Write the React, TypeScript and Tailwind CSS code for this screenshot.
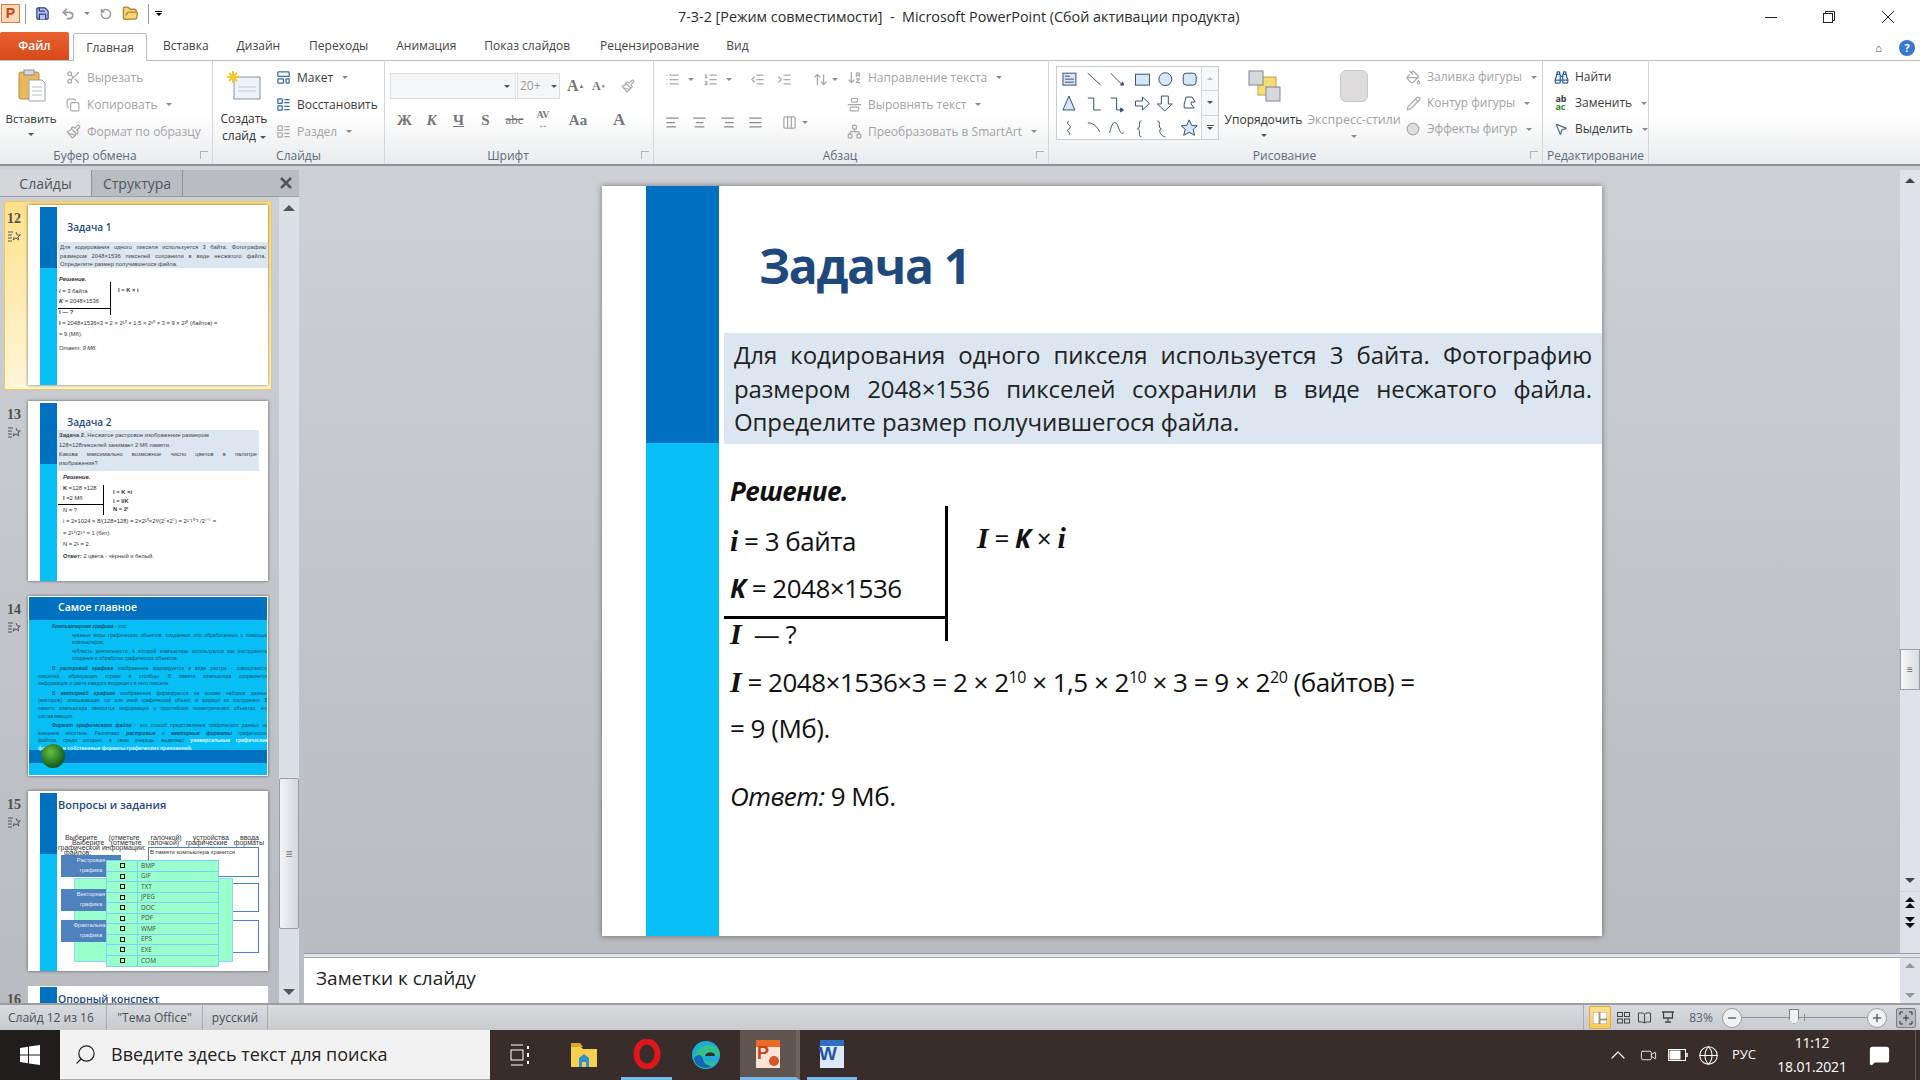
import type { ReactNode } from "react";
import {
  Scissors,
  Copy,
  Paintbrush,
  LayoutTemplate,
  LayoutList,
  RotateCcw,
  FolderOpen,
  Undo2,
  Save,
  ChevronUp,
  Search,
  Video,
  Globe,
  MessageSquare,
  Binoculars,
  MousePointer2,
  PaintBucket,
  Pencil,
  Circle,
  AlignLeft,
  AlignCenter,
  AlignRight,
  AlignJustify,
  AlignVerticalJustifyCenter,
  List,
  ListOrdered,
  IndentDecrease,
  IndentIncrease,
  Columns3,
  ArrowUpDown,
  ArrowDownAZ,
  Network,
  Minus,
  Plus,
} from "lucide-react";

const UI = "font-['Open_Sans','Noto_Sans',sans-serif]";

function Caret({ className = "" }: { className?: string }) {
  return <span className={`inline-block w-0 h-0 border-x-[3px] border-x-transparent border-t-[3px] border-t-[#8a8a8a] ${className}`} />;
}

function RibbonGroup({ label, width, children, launcher }: { label: string; width: number; children: ReactNode; launcher?: boolean }) {
  return (
    <div className="shrink-0 h-full flex flex-col border-r border-[#d3d7dc] relative" style={{ width }}>
      <div className="flex-1 min-h-0 flex">{children}</div>
      <div className={`h-[16px] flex items-center justify-center text-[12px] text-[#5f6b78] ${launcher ? "pr-[22px]" : ""}`}>{label}</div>
      {launcher && <span className="absolute right-[4px] bottom-[5px] w-[8px] h-[8px] border-l border-t border-[#b5b5b5]" />}
    </div>
  );
}

function SmallCmd({ icon, text, muted, caret, tight }: { icon: ReactNode; text: string; muted?: boolean; caret?: boolean; tight?: boolean }) {
  return (
    <div className={`${tight ? "h-[26px]" : "h-[27px]"} flex items-center gap-[6px] text-[12px] whitespace-nowrap ${muted ? "text-[#a3a3a3]" : "text-[#3b3b3b]"}`}>
      <span className="w-[16px] h-[16px] flex items-center justify-center">{icon}</span>
      {text}
      {caret && <Caret className="ml-[3px]" />}
    </div>
  );
}

function ShapesGallery() {
  const s = "#35507a";
  return (
    <div className="mt-[5px] w-[163px] h-[74px] border border-[#c7ccd2] bg-white flex">
      <svg width="145" height="72" viewBox="0 0 145 72" fill="none" stroke={s} strokeWidth="1">
        <g transform="translate(1 1)">
          <rect x="5" y="5" width="13" height="12" fill="#dce6f2" />
          <path d="M7 8h5M7 11h9M7 14h9" />
          <path d="M30 5l13 12M53 5l12 12" />
          <path d="M63 17l3 0-1-3z" fill={s} />
          <rect x="78" y="6" width="14" height="11" fill="#d7e6f5" />
          <circle cx="108" cy="11" r="6.500" fill="#d7e6f5" />
          <rect x="126" y="5" width="13" height="12" rx="3" fill="#d7e6f5" />
          <path d="M11 28l6 14h-12z" fill="#d7e6f5" />
          <path d="M30 30h6v12h7M53 30h6v12h6" />
          <path d="M63 40l3 2-3 2z" fill={s} />
          <path d="M78 33h7v-4l7 6.500-7 6.500v-4h-7z" fill="#fff" />
          <path d="M104 28h7v8h4l-7.500 7-7.500-7h4z" fill="#fff" />
          <path d="M127 36l2-7h6l3 5h-4v2l3 4h-10z" fill="#fff" />
          <path d="M11 53c-5 3 5 5 0 8-4 2 3 4 0 6M30 55c5 0 9 3 12 9M52 65c3-13 6-13 9-5s3 5 5 5M84 53c-4 0 0 7-4 8 4 1 0 8 4 8M100 53c4 0 0 7 4 8-4 1 0 8 4 8" />
          <path d="M132 52l2.500 5.500 5.500.5-4 3.500 1.500 6-5.500-3-5.500 3 1.500-6-4-3.500 5.500-.5z" fill="#d7e6f5" />
        </g>
      </svg>
      <div className="w-[17px] ml-auto flex flex-col border-l border-[#d4d8dd] bg-[#f6f7f8]">
        <div className="flex-1 flex items-center justify-center border-b border-[#d4d8dd]"><span className="w-0 h-0 border-x-[3px] border-x-transparent border-b-[3px] border-b-[#bbb]" /></div>
        <div className="flex-1 flex items-center justify-center border-b border-[#d4d8dd]"><Caret className="border-t-[#555]" /></div>
        <div className="flex-1 flex flex-col items-center justify-center gap-[1px]"><span className="w-[7px] h-px bg-[#555]" /><Caret className="border-t-[#555]" /></div>
      </div>
    </div>
  );
}

function Ribbon() {
  const m = "#a9a9a9";
  const sep = <span className="w-px h-[20px] bg-[#d4d7db]" />;
  return (
    <div className="h-[106px] shrink-0 flex bg-gradient-to-b from-white via-white to-[#e9ebed] border-t border-[#b9bcc0] border-b-2 border-b-[#8f9296]">
      <RibbonGroup label="Буфер обмена" width={213} launcher>
        <div className="w-[62px] flex flex-col items-center pt-[8px] text-[11.500px] text-[#333]">
          <svg width="30" height="34" viewBox="0 0 30 34">
            <rect x="3" y="3" width="20" height="27" rx="2" fill="#e7b95c" stroke="#b48a3e" />
            <rect x="8" y="1" width="10" height="5" fill="#d5d8dc" stroke="#8a8f96" />
            <path d="M13 11h13l3 3v18h-16z" fill="#fff" stroke="#9aa3ad" />
            <path d="M16 18h10M16 22h10M16 26h10" stroke="#b7bec6" />
          </svg>
          <span className="mt-[7px]">Вставить</span>
          <Caret className="mt-[6px] border-t-[#555]" />
        </div>
        <div className="pt-[3px] pl-[3px]">
          <SmallCmd muted icon={<Scissors size={15} color={m} />} text="Вырезать" />
          <SmallCmd muted caret icon={<Copy size={14} color={m} />} text="Копировать" />
          <SmallCmd muted icon={<Paintbrush size={15} color={m} />} text="Формат по образцу" />
        </div>
      </RibbonGroup>
      <RibbonGroup label="Слайды" width={172}>
        <div className="w-[62px] flex flex-col items-center pt-[9px] text-[12px] leading-[17px] text-[#333] text-center">
          <svg width="36" height="32" viewBox="0 0 36 32">
            <rect x="8" y="7" width="26" height="22" fill="#eef3f9" stroke="#8a96a3" />
            <path d="M12 17h18M12 21h18" stroke="#bcc7d3" />
            <path d="M7 1v12M1 7h12M3 3l8 8M11 3l-8 8" stroke="#f4c72f" strokeWidth="2" />
          </svg>
          <span className="mt-[8px]">Создать</span>
          <span>слайд <Caret className="ml-[1px] mb-[1px] border-t-[#555]" /></span>
        </div>
        <div className="pt-[3px]">
          <SmallCmd caret icon={<LayoutTemplate size={15} color="#3c6a9e" />} text="Макет" />
          <SmallCmd icon={<LayoutList size={15} color="#2f6aa8" />} text="Восстановить" />
          <SmallCmd muted caret icon={<LayoutList size={15} color={m} />} text="Раздел" />
        </div>
      </RibbonGroup>
      <RibbonGroup label="Шрифт" width={269} launcher>
        <div className="pl-[5px] pt-[12px] text-[#9a9a9a]">
          <div className="flex items-center">
            <div className="w-[126px] h-[26px] border border-[#dcdfe3] bg-[#f5f6f7] flex items-center justify-end pr-[5px]"><Caret className="border-t-[#555]" /></div>
            <div className="w-[43px] h-[26px] ml-px border border-[#dcdfe3] bg-[#f5f6f7] flex items-center justify-between px-[2px] text-[12px]">20+<Caret className="border-t-[#555]" /></div>
            <span className="ml-[7px] w-[17px] font-['Liberation_Serif',serif] text-[16px] font-bold text-[#777]">A<sup className="text-[6px]">▲</sup></span>
            <span className="ml-[8px] w-[14px] font-['Liberation_Serif',serif] text-[12px] font-bold text-[#777]">A<sup className="text-[5px]">▼</sup></span>
            <span className="ml-[5px]">{sep}</span>
            <Paintbrush size={14} color={m} className="ml-[10px]" />
          </div>
          <div className="flex items-center h-[24px] mt-[9px] ml-px font-['Liberation_Serif',serif] text-[15px] font-bold text-[#777] text-center">
            <span className="w-[27px]">Ж</span>
            <span className="w-[27px] italic">К</span>
            <span className="w-[27px] underline">Ч</span>
            <span className="w-[27px]">S</span>
            <span className="w-[31px] line-through font-normal text-[13px]">abc</span>
            <span className="w-[26px] text-[10px] leading-[10px]">AV<br />↔</span>
            <span className="w-[44px]">Aa</span>
            <span className="ml-[5px]">{sep}</span>
            <span className="ml-[8px] text-[17px]">A</span>
          </div>
        </div>
      </RibbonGroup>
      <RibbonGroup label="Абзац" width={395} launcher>
        <div className="w-[192px] shrink-0 pl-[11px] pt-[5px]">
          <div className="flex items-center h-[26px]">
            <List size={15} color={m} /><Caret className="ml-[8px]" />
            <ListOrdered size={15} color={m} className="ml-[9px]" /><Caret className="ml-[8px]" />
            <span className="ml-[9px]">{sep}</span>
            <IndentDecrease size={15} color={m} className="ml-[9px]" /><IndentIncrease size={15} color={m} className="ml-[12px]" />
            <span className="ml-[9px]">{sep}</span>
            <ArrowUpDown size={15} color={m} className="ml-[12px]" /><Caret className="ml-[4px]" />
          </div>
          <div className="flex items-center h-[26px] mt-[17px]">
            <AlignLeft size={15} color="#8a8a8a" /><AlignCenter size={15} color="#8a8a8a" className="ml-[12px]" /><AlignRight size={15} color="#8a8a8a" className="ml-[13px]" /><AlignJustify size={15} color="#8a8a8a" className="ml-[13px]" />
            <span className="ml-[10px]">{sep}</span>
            <Columns3 size={15} color={m} className="ml-[9px]" /><Caret className="ml-[5px]" />
          </div>
        </div>
        <div className="pt-[3px]">
          <SmallCmd muted caret icon={<ArrowDownAZ size={15} color={m} />} text="Направление текста" />
          <SmallCmd muted caret icon={<AlignVerticalJustifyCenter size={15} color={m} />} text="Выровнять текст" />
          <SmallCmd muted caret icon={<Network size={15} color={m} />} text="Преобразовать в SmartArt" />
        </div>
      </RibbonGroup>
      <RibbonGroup label="Рисование" width={494} launcher>
        <div className="pl-[7px]"><ShapesGallery /></div>
        <div className="w-[85px] ml-[2px] flex flex-col items-center pt-[9px] text-[12px] text-[#333]">
          <svg width="36" height="32" viewBox="0 0 36 32">
            <rect x="12" y="7" width="18" height="18" fill="#f6dc75" stroke="#b9a24a" />
            <rect x="3" y="1" width="14" height="14" fill="#d5d8dc" stroke="#808790" />
            <rect x="20" y="17" width="14" height="14" fill="#d5d8dc" stroke="#808790" />
          </svg>
          <span className="mt-[9px]">Упорядочить</span>
          <Caret className="mt-[5px] border-t-[#555]" />
        </div>
        <div className="w-[96px] flex flex-col items-center pt-[9px] text-[12.500px] text-[#a3a3a3]">
          <div className="w-[28px] h-[32px] rounded-[6px] bg-[#dedcdc] border border-[#c9c7c7]" />
          <span className="mt-[9px] whitespace-nowrap">Экспресс-стили</span>
          <Caret className="mt-[5px]" />
        </div>
        <div className="pl-[3px] pt-[3px]">
          <SmallCmd tight muted caret icon={<PaintBucket size={15} color={m} />} text="Заливка фигуры" />
          <SmallCmd tight muted caret icon={<Pencil size={15} color={m} />} text="Контур фигуры" />
          <SmallCmd tight muted caret icon={<Circle size={14} color={m} fill="#ddd" />} text="Эффекты фигур" />
        </div>
      </RibbonGroup>
      <RibbonGroup label="Редактирование" width={106}>
        <div className="pl-[10px] pt-[3px]">
          <SmallCmd tight icon={<Binoculars size={15} color="#2f5e9e" />} text="Найти" />
          <SmallCmd tight caret icon={<span className="text-[9px] leading-[8px] font-bold text-[#3a3a3a]">ab<br /><span className="text-[#2a8a2a]">ac</span></span>} text="Заменить" />
          <SmallCmd tight caret icon={<MousePointer2 size={14} color="#5a6a7c" />} text="Выделить" />
        </div>
      </RibbonGroup>
    </div>
  );
}

function ThumbNum({ n }: { n: number }) {
  return (
    <div className="w-[23px] shrink-0 pl-[2px] pt-[6px] text-[#54504a] font-['Liberation_Serif',serif] font-bold text-[14px] leading-[16px]">
      {n}
      <svg className="mt-[3px]" width="14" height="12" viewBox="0 0 14 12" fill="none" stroke="#555">
        <path d="M1 2h5M1 5h4M1 8h4M1 11h4" />
        <path d="M9 2l1.300 3h3l-2.500 2 1 3-2.800-2-2.800 2 1-3" />
      </svg>
    </div>
  );
}

function MiniText({ children, className = "" }: { children: ReactNode; className?: string }) {
  return <div className={`font-['Liberation_Sans',sans-serif] text-[5.800px] leading-[8.500px] whitespace-nowrap ${className}`}>{children}</div>;
}

function MiniLine({ children, className = "" }: { children: ReactNode; className?: string }) {
  return <MiniText className={`[text-align:justify] [text-align-last:justify] whitespace-normal ${className}`}>{children}</MiniText>;
}

function Thumb({ children, bg = "bg-white" }: { children: ReactNode; bg?: string }) {
  return (
    <div className={`relative w-[240px] h-[180px] shrink-0 overflow-hidden ${bg} shadow-[0_0_3px_rgba(0,0,0,0.55)]`}>{children}</div>
  );
}

function BlueBar() {
  return (
    <div className="absolute left-[12px] top-[2px] bottom-0 w-[17px] flex flex-col">
      <div className="h-[61px] bg-[#0070c0]" />
      <div className="flex-1 bg-[#08bff5]" />
    </div>
  );
}

function Slide12Thumb() {
  return (
    <Thumb>
      <BlueBar />
      <div className="absolute left-[39px] top-[15px] text-[10px] font-semibold text-[#1f497d]">Задача 1</div>
      <div className="absolute left-[30px] right-0 top-[37px] h-[26px] bg-[#dce6f1] px-[2px] pt-[1px] text-[#444]">
        <MiniLine>Для кодирования одного пикселя используется 3 байта. Фотографию</MiniLine>
        <MiniLine>размером 2048×1536 пикселей сохранили в виде несжатого файла.</MiniLine>
        <MiniText>Определите размер получившегося файла.</MiniText>
      </div>
      <div className="absolute left-[31px] top-[70px] text-[#333]">
        <MiniText className="font-bold italic">Решение.</MiniText>
        <MiniText className="mt-[3px]"><b><i>i</i></b> = 3 байта</MiniText>
        <MiniText className="mt-[2px]"><b><i>K</i></b> = 2048×1536</MiniText>
        <MiniText className="mt-[2px] font-bold">I — ?</MiniText>
        <MiniText className="mt-[3px]"><b>I</b> = 2048×1536×3 = 2 × 2¹⁰ × 1,5 × 2¹⁰ × 3 = 9 × 2²⁰ (байтов) =</MiniText>
        <MiniText className="mt-[2px]">= 9 (Мб).</MiniText>
        <MiniText className="mt-[6px] italic">Ответ: 9 Мб.</MiniText>
      </div>
      <div className="absolute left-[30px] top-[103px] w-[52px] h-px bg-black" />
      <div className="absolute left-[82px] top-[77px] w-px h-[33px] bg-black" />
      <div className="absolute left-[90px] top-[81px] text-[#333]"><MiniText className="font-bold">I = K × i</MiniText></div>
    </Thumb>
  );
}

function Slide13Thumb() {
  return (
    <Thumb>
      <BlueBar />
      <div className="absolute left-[39px] top-[14px] text-[10px] font-semibold text-[#1f497d]">Задача 2</div>
      <div className="absolute left-[29px] right-[9px] top-[29px] h-[41px] bg-[#dce6f1] px-[2px] pt-[1px] text-[#444]">
        <MiniText><b>Задача 2.</b> Несжатое растровое изображение размером</MiniText>
        <MiniText className="mt-[1px]">128×128пикселей занимает 2 Мб памяти.</MiniText>
        <MiniLine className="mt-[1px]">Какова максимально возможное число цветов в палитре</MiniLine>
        <MiniText>изображения?</MiniText>
      </div>
      <div className="absolute left-[35px] top-[72px] text-[#333]">
        <MiniText className="font-bold italic">Решение.</MiniText>
        <MiniText className="mt-[2px]"><b>K</b> =128 ×128</MiniText>
        <MiniText className="mt-[2px]"><b>I</b> =2 Мб</MiniText>
        <MiniText className="mt-[3px]">N = ?</MiniText>
        <MiniText className="mt-[3px]">i = 2×1024 × 8/(128×128) = 2×2¹⁰×2³/(2⁷×2⁷) = 2¹⁺¹⁰⁺³ /2⁷⁺⁷ =</MiniText>
        <MiniText className="mt-[3px]">= 2¹⁴/2¹⁴ = 1 (бит).</MiniText>
        <MiniText className="mt-[3px]">N = 2¹ = 2.</MiniText>
        <MiniText className="mt-[3px]"><b>Ответ:</b> 2 цвета - чёрный и белый.</MiniText>
      </div>
      <div className="absolute left-[30px] top-[103px] w-[45px] h-px bg-black" />
      <div className="absolute left-[75px] top-[84px] w-px h-[30px] bg-black" />
      <div className="absolute left-[85px] top-[87px] text-[#333] font-bold">
        <MiniText>I = K ×i</MiniText>
        <MiniText>i = I/K</MiniText>
        <MiniText>N = 2ⁱ</MiniText>
      </div>
    </Thumb>
  );
}

function Slide14Thumb() {
  return (
    <Thumb bg="bg-[#08bff5]">
      <div className="absolute left-0 right-0 top-0 h-[24px] bg-[#0070c0] pl-[30px] pt-[4px] text-[10.500px] font-semibold text-white">Самое главное</div>
      <div className="absolute left-0 right-0 top-[154px] h-[13px] bg-[#0070c0]" />
      <div className="absolute left-[10px] right-0 top-[27px] text-[#10506f] [&>div]:text-[5px] [&>div]:leading-[7.600px]">
        <MiniText className="pl-[14px]"><b><i>Компьютерная графика</i></b> - это:</MiniText>
        <MiniLine className="pl-[34px] mt-[1px]">•разные виды графических объектов, созданных или обработанных с помощью</MiniLine>
        <MiniText className="pl-[34px]">компьютеров;</MiniText>
        <MiniLine className="pl-[34px] mt-[1px]">•область деятельности, в которой компьютеры используются как инструменты</MiniLine>
        <MiniText className="pl-[34px]">создания и обработки графических объектов.</MiniText>
        <MiniLine className="pl-[14px] mt-[2px]">В <b><i>растровой графике</i></b> изображение формируется в виде растра - совокупности</MiniLine>
        <MiniLine>пикселей, образующих строки и столбцы. В памяти компьютера сохраняется</MiniLine>
        <MiniText>информация о цвете каждого входящего в него пикселя.</MiniText>
        <MiniLine className="pl-[14px] mt-[2px]">В <b><i>векторной графике</i></b> изображения формируются на основе наборов данных</MiniLine>
        <MiniLine>(векторов), описывающих тот или иной графический объект, и формул их построения. В</MiniLine>
        <MiniLine>памяти компьютера заносится информация о простейших геометрических объектах, его</MiniLine>
        <MiniText>составляющих.</MiniText>
        <MiniLine className="pl-[14px] mt-[2px]"><b><i>Формат графического файла</i></b> - это способ представления графических данных на</MiniLine>
        <MiniLine>внешнем носителе. Различают <b><i>растровые</i></b> и <b><i>векторные форматы</i></b> графических</MiniLine>
        <MiniLine>файлов, среди которых, в свою очередь, выделяют <span className="text-[#e6f7fd] font-bold">универсальные графические</span></MiniLine>
        <MiniText className="font-bold text-[#d8f3fb]">форматы и собственные форматы графических приложений.</MiniText>
      </div>
      <div className="absolute left-[13px] top-[148px] w-[24px] h-[24px] rounded-full bg-[radial-gradient(circle_at_40%_35%,#67c23a,#1d6b24_60%,#0d2e12)]" />
      <div className="absolute inset-0 border border-white" />
    </Thumb>
  );
}

function Slide15Thumb() {
  const rows = ["BMP", "GIF", "TXT", "JPEG", "DOC", "PDF", "WMF", "EPS", "EXE", "COM"];
  const labels = [
    { t: "Растровая", c: "top-[64px]" },
    { t: "Векторная", c: "top-[98px]" },
    { t: "Фрактальная", c: "top-[129px]" },
  ];
  return (
    <Thumb>
      <BlueBar />
      <div className="absolute left-[30px] top-[6px] text-[11px] font-semibold text-[#1f497d]">Вопросы и задания</div>
      <div className="absolute left-[37px] top-[43px] w-[194px] text-[#333] [&>div]:text-[7px]"><MiniLine>Выберите (отметьте галочкой) устройства ввода</MiniLine></div>
      <div className="absolute left-[44px] top-[48px] w-[192px] text-[#333] [&>div]:text-[7px]"><MiniLine>Выберите (отметьте галочкой) графические форматы</MiniLine></div>
      <div className="absolute left-[30px] top-[53px] text-[#333] [&>div]:text-[7px]"><MiniText>графической информации:</MiniText></div>
      <div className="absolute left-[36px] top-[58px] text-[#333] [&>div]:text-[7px]"><MiniText>файлов:</MiniText></div>
      {[
        { c: "top-[56px] h-[30px]", t: "В памяти компьютера хранится" },
        { c: "top-[92px] h-[29px]", t: "" },
        { c: "top-[129px] h-[33px]", t: "" },
      ].map((b) => (
        <div key={b.c} className={`absolute left-[120px] w-[111px] border border-[#4f81bd] bg-white pl-[1px] text-[#333] ${b.c}`}><MiniText>{b.t}</MiniText></div>
      ))}
      <div className="absolute left-[46px] top-[87px] w-[159px] h-[84px] bg-[#99ffcc] border border-[#8ed8f0]" />
      {labels.map((l) => (
        <div key={l.t} className={`absolute left-[33px] w-[60px] h-[22px] bg-[#4f81bd] text-[#e8eef5] text-center ${l.c}`}>
          <MiniText className="leading-[10px]">{l.t}</MiniText><MiniText className="leading-[10px]">графика</MiniText>
        </div>
      ))}
      <div className="absolute left-[78px] top-[69px] w-[113px] bg-[#99ffcc] border border-[#7fd0f5]">
        {rows.map((r) => (
          <div key={r} className="h-[10.500px] flex items-center border-b border-[#7fd0f5] last:border-b-0">
            <span className="w-[30px] flex justify-center"><span className="w-[5px] h-[5px] border border-black" /></span>
            <span className="pl-[3px] border-l border-[#7fd0f5] text-[6.500px] text-[#444]">{r}</span>
          </div>
        ))}
      </div>
    </Thumb>
  );
}

function SlidePanel() {
  const items = [
    { n: 13, el: <Slide13Thumb />, mt: "mt-[11px]" },
    { n: 14, el: <Slide14Thumb />, mt: "mt-[15px]" },
    { n: 15, el: <Slide15Thumb />, mt: "mt-[15px]" },
  ];
  return (
    <div className="w-[304px] shrink-0 flex flex-col pt-[4px] bg-gradient-to-b from-[#cdd0d5] to-[#b8bbbf]">
      <div className="h-[27px] shrink-0 flex bg-[#b9bcc0] border-b border-[#9b9ea2] text-[14px] text-[#4c5560] mr-[5px]">
        <div className="w-[91px] bg-[#d4d6d9] flex items-center justify-center">Слайды</div>
        <div className="w-[92px] flex items-center justify-center border-x border-[#8d9094]">Структура</div>
        <div className="flex-1 flex items-center justify-end pr-[7px]">
          <svg width="12" height="12" viewBox="0 0 12 12" stroke="#555" strokeWidth="2.500"><path d="M1 1l10 10M11 1L1 11" /></svg>
        </div>
      </div>
      <div className="flex-1 min-h-0 flex">
        <div className="flex-1 min-w-0 overflow-hidden pt-[4px] pl-[4px]">
          <div className="w-[268px] flex border border-[#f2c85b] rounded-[2px] bg-gradient-to-b from-[#fde08a] to-[#fff6d8] pt-[3px] pb-[4px]">
            <ThumbNum n={12} />
            <Slide12Thumb />
          </div>
          {items.map((it) => (
            <div key={it.n} className={`flex ${it.mt} pl-px`}>
              <ThumbNum n={it.n} />
              {it.el}
            </div>
          ))}
          <div className="flex mt-[15px] pl-px">
            <ThumbNum n={16} />
            <div className="relative w-[240px] h-[40px] bg-white overflow-hidden">
              <div className="absolute left-[12px] top-[1px] w-[17px] h-[40px] bg-[#0070c0]" />
              <div className="absolute left-[30px] top-[6px] text-[10.500px] font-semibold text-[#1f497d]">Опорный конспект</div>
            </div>
          </div>
        </div>
        <div className="w-[20px] shrink-0 mr-[5px] flex flex-col bg-[#dbdfe6]">
          <div className="h-[22px] flex items-center justify-center"><span className="w-0 h-0 border-x-[6px] border-x-transparent border-b-[6px] border-b-[#555]" /></div>
          <div className="flex-1 flex flex-col">
            <div className="h-[559px]" />
            <div className="h-[151px] bg-gradient-to-r from-[#f3f4f6] to-[#d4d7dd] border border-[#9a9da2] rounded-[2px] flex items-center justify-center text-[#777] text-[12px]">≡</div>
          </div>
          <div className="h-[22px] flex items-center justify-center"><Caret className="border-x-[6px] border-t-[6px] border-t-[#555]" /></div>
        </div>
      </div>
    </div>
  );
}

function Var({ children }: { children: ReactNode }) {
  return <span className="font-['Liberation_Serif',serif] italic font-bold text-[30px]">{children}</span>;
}

function Sup({ children }: { children: ReactNode }) {
  return <sup className="text-[16px] -top-[9px]">{children}</sup>;
}

function Slide() {
  return (
    <div className="relative w-[1000px] h-[750px] bg-white shadow-[0_0_6px_rgba(0,0,0,0.45)] overflow-hidden text-[#111]">
      <div className="flex h-full">
        <div className="ml-[44px] w-[73px] shrink-0 flex flex-col">
          <div className="h-[257px] bg-[#0070c0]" />
          <div className="flex-1 bg-[#08bff5]" />
        </div>
        <div className="flex-1 min-w-0 pl-[5px]">
          <div className="h-[147px] pl-[35px] pt-[46px] text-[48px] leading-[68px] font-bold text-[#1f497d] tracking-[-1.3px]">Задача 1</div>
          <div className="h-[111px] bg-[#dce6f1] px-[10px] pt-[5px] text-[24px] leading-[33.500px] text-[#222] [text-align:justify] tracking-[-0.1px]">
            Для кодирования одного пикселя используется 3 байта. Фотографию размером 2048×1536 пикселей сохранили в виде несжатого файла. Определите размер получившегося файла.
          </div>
          <div className="relative pl-[6px] text-[26px] tracking-[-0.5px]">
            <div className="pt-[27px] leading-[40px] font-bold italic">Решение.</div>
            <div className="mt-[10px] leading-[40px]"><Var>i</Var> = 3 байта</div>
            <div className="mt-[7px] leading-[40px]"><b><i>K</i></b> = 2048×1536</div>
            <div className="mt-[6px] leading-[40px]"><Var>I</Var> &nbsp;— ?</div>
            <div className="mt-[8px] leading-[40px] whitespace-nowrap"><Var>I</Var> = 2048×1536×3 = 2 × 2<Sup>10</Sup> × 1,5 × 2<Sup>10</Sup> × 3 = 9 × 2<Sup>20</Sup> (байтов) =</div>
            <div className="mt-[6px] leading-[40px]">= 9 (Мб).</div>
            <div className="mt-[28px] leading-[40px]"><i>Ответ:</i> 9 Мб.</div>
            <div className="absolute left-0 top-[172px] w-[222px] h-[3px] bg-black" />
            <div className="absolute left-[221px] top-[62px] w-[3px] h-[135px] bg-black" />
            <div className="absolute left-[253px] top-[74px] leading-[40px] whitespace-nowrap"><Var>I</Var> = <b><i>K</i></b> × <Var>i</Var></div>
          </div>
        </div>
      </div>
    </div>
  );
}

function MainScroll() {
  return (
    <div className="w-[20px] shrink-0 flex flex-col bg-[#dfe2e8] mt-[4px]">
      <div className="h-[20px] flex items-center justify-center"><span className="w-0 h-0 border-x-[5px] border-x-transparent border-b-[5px] border-b-[#444]" /></div>
      <div className="flex-1 relative">
        <div className="absolute left-0 right-0 top-[459px] h-[41px] bg-gradient-to-r from-[#f7f8f9] to-[#d9dce2] border border-[#9a9da2] flex items-center justify-center text-[10px] text-[#666]">≡</div>
      </div>
      <div className="h-[22px] flex items-center justify-center"><Caret className="border-x-[5px] border-t-[5px] border-t-[#444]" /></div>
      <div className="h-[62px] pt-[5px] flex flex-col items-center gap-[6px] border-t border-[#cfd2d7]">
        <svg width="12" height="13" viewBox="0 0 12 13"><path d="M6 0l5 5H1zM6 6l5 5H1z" fill="#111" /></svg>
        <svg width="12" height="13" viewBox="0 0 12 13"><path d="M1 1h10L6 6zM1 7h10l-5 5z" fill="#111" /></svg>
      </div>
    </div>
  );
}

function StatusBar() {
  return (
    <div className="h-[27px] shrink-0 flex items-center bg-gradient-to-b from-[#d9dbde] to-[#c8cbce] border-t-2 border-[#9a9da1] text-[12px] text-[#4a4f55]">
      <div className="h-full w-[107px] flex items-center whitespace-nowrap pl-[8px] border-r border-[#a8abaf]">Слайд 12 из 16</div>
      <div className="h-full w-[96px] flex items-center justify-center whitespace-nowrap border-r border-[#a8abaf]">&quot;Тема Office&quot;</div>
      <div className="h-full w-[65px] flex items-center justify-center border-r border-[#a8abaf]">русский</div>
      <div className="ml-auto h-full flex items-center pr-[4px]">
        <span className="w-px h-full bg-[#a8abaf] mr-[5px]" />
        <div className="w-[22px] h-[23px] rounded-[2px] border border-[#e0a93c] bg-gradient-to-b from-[#ffe08a] to-[#fbc95a] flex items-center justify-center">
          <svg width="14" height="12" viewBox="0 0 14 12"><rect x="0" y="0" width="6" height="12" fill="#fff" stroke="#444" strokeWidth=".5" /><rect x="7" y="0" width="7" height="7" fill="#fff" stroke="#444" strokeWidth=".5" /><rect x="7" y="8" width="7" height="4" fill="#fff" stroke="#444" strokeWidth=".5" /></svg>
        </div>
        <svg className="ml-[6px]" width="13" height="12" viewBox="0 0 13 12" fill="none" stroke="#444"><rect x=".5" y=".5" width="5" height="4" /><rect x="7.500" y=".5" width="5" height="4" /><rect x=".5" y="7" width="5" height="4" /><rect x="7.500" y="7" width="5" height="4" /></svg>
        <svg className="ml-[8px]" width="13" height="12" viewBox="0 0 13 12" fill="none" stroke="#444"><path d="M6.500 2C5 .8 3 .8 .5 1v9c2.500-.2 4.500-.2 6 1 1.500-1.200 3.500-1.200 6-1V1C10 .8 8 .8 6.500 2zM6.500 2v9" /></svg>
        <svg className="ml-[10px]" width="14" height="13" viewBox="0 0 14 13" fill="none" stroke="#444"><path d="M1 1h12M2.500 1v6h9V1M7 7v3M4 11h6" strokeWidth="1.300" /></svg>
        <span className="ml-[14px] w-[24px] text-center whitespace-nowrap text-[#5a5f68]">83%</span>
        <span className="ml-[9px] w-[20px] h-[20px] rounded-full border border-[#9a9da2] bg-[#f0f1f3] flex items-center justify-center"><Minus size={12} color="#666" strokeWidth={3} /></span>
        <div className="relative w-[125px] h-px bg-[#8f9296]">
          <span className="absolute left-[47px] -top-[8px] w-[10px] h-[15px] bg-[#eef0f2] border border-[#7d8084] [clip-path:polygon(0_0,100%_0,100%_70%,50%_100%,0_70%)]" />
          <span className="absolute left-[62px] -top-[3px] w-px h-[7px] bg-[#8f9296]" />
        </div>
        <span className="w-[20px] h-[20px] rounded-full border border-[#9a9da2] bg-[#f0f1f3] flex items-center justify-center"><Plus size={12} color="#666" strokeWidth={3} /></span>
        <span className="ml-[9px] w-[20px] h-[20px] rounded-[2px] border border-[#7d8084] bg-[#b9bcc0] flex items-center justify-center">
          <svg width="14" height="14" viewBox="0 0 14 14" fill="none" stroke="#333"><path d="M1 4V1h3M10 1h3v3M13 10v3h-3M4 13H1v-3M7 4v6M4 7h6" /></svg>
        </span>
      </div>
    </div>
  );
}

function Taskbar() {
  const sep = "border-b-[3px] border-[#76b9ed]";
  return (
    <div className="h-[50px] shrink-0 flex items-stretch bg-[#382d2a] text-white">
      <div className="w-[60px] bg-[#211d1c] flex items-center justify-center">
        <svg width="20" height="20" viewBox="0 0 20 20" fill="#fff"><path d="M0 3l8-1.200V9.500H0zM9 1.600L20 0v9.500H9zM0 10.500h8v7.700L0 17zM9 10.500h11V20L9 18.400z" /></svg>
      </div>
      <div className="w-[430px] bg-[#f2f2f2] flex items-center pl-[14px] text-[#222] text-[18px] border-b border-[#aaa]">
        <Search size={23} color="#222" strokeWidth={1.300} className="-scale-x-100" />
        <span className="ml-[14px] whitespace-nowrap">Введите здесь текст для поиска</span>
      </div>
      <div className="w-[60px] flex items-center justify-center">
        <svg width="20" height="22" viewBox="0 0 20 22" fill="none" stroke="#fff"><path d="M1 1h12M1 21h12" /><rect x="1" y="6" width="12" height="10" /><path d="M18 2v3M18 9v4M18 17v3" strokeWidth="2" /></svg>
      </div>
      <div className="w-[64px] ml-[2px] flex items-center justify-center">
        <svg width="28" height="26" viewBox="0 0 28 26"><path d="M1 4h9l3 3h14v18H1z" fill="#f7cf4f" /><path d="M1 1h9l3 4H1z" fill="#d9a72c" /><path d="M9 16l5-4 5 4v9h-3v-5h-4v5H9z" fill="#2f8fd6" /></svg>
      </div>
      <div className={`w-[51px] ml-[5px] flex items-center justify-center ${sep}`}>
        <svg width="28" height="30" viewBox="0 0 28 30"><ellipse cx="14" cy="15" rx="10.500" ry="12.500" fill="none" stroke="#e0161b" strokeWidth="6" /></svg>
      </div>
      <div className="w-[68px] flex items-center justify-center">
        <svg width="30" height="30" viewBox="0 0 30 30"><circle cx="15" cy="15" r="14" fill="#1fa9d8" /><path d="M3 18C4 8 14 3 22 6c5 2 7 6 7 10H12c0 5 6 8 14 5-3 6-10 9-16 7C5 26 2 22 3 18z" fill="#2fc28f" /><path d="M14 16c1-5 10-5 10 0z" fill="#382d2a" /><path d="M3 18c3-4 8-4 9 1 1 5 6 7 9 7-6 4-17 2-18-8z" fill="#1067b5" /></svg>
      </div>
      <div className={`w-[60px] bg-[#5f5450] border-r-[4px] border-r-[#6e6460] flex items-center justify-center ${sep}`}>
        <svg width="28" height="28" viewBox="0 0 28 28"><rect x="2" y="0" width="24" height="28" fill="#fbe3d6" /><rect x="2" y="0" width="24" height="7" fill="#e96b27" /><text x="3" y="19" fontSize="18" fontWeight="700" fill="#c8431a" fontFamily="Liberation Sans">P</text><circle cx="20" cy="21" r="5" fill="#d8542b" /></svg>
      </div>
      <div className={`w-[50px] ml-[7px] flex items-center justify-center ${sep}`}>
        <svg width="28" height="28" viewBox="0 0 28 28"><rect x="2" y="0" width="24" height="28" fill="#dce9f8" /><rect x="2" y="0" width="24" height="6" fill="#2f6fc1" /><text x="1" y="20" fontSize="19" fontWeight="700" fill="#1f56a5" fontFamily="Liberation Sans">W</text></svg>
      </div>
      <div className="ml-auto flex items-center pr-[4px] text-[14px]">
        <ChevronUp size={24} strokeWidth={1.200} />
        <Video size={17} strokeWidth={1.200} className="ml-[10px]" />
        <svg className="ml-[11px]" width="20" height="12" viewBox="0 0 20 12" fill="none" stroke="#fff"><rect x=".5" y=".5" width="17" height="11" /><rect x="2" y="2" width="10" height="8" fill="#fff" /><path d="M19 4v4" strokeWidth="1.500" /></svg>
        <Globe size={21} strokeWidth={1.200} className="ml-[10px]" />
        <span className="ml-[13px] text-[13px] w-[27px] whitespace-nowrap">РУС</span>
        <div className="ml-[18px] w-[70px] text-center text-[14px] leading-[24px] tracking-[-0.2px]">
          <div>11:12</div><div>18.01.2021</div>
        </div>
        <MessageSquare size={21} fill="#fff" stroke="#fff" className="ml-[22px]" />
        <span className="ml-[25px] w-px h-full bg-[#5f5653]" />
      </div>
    </div>
  );
}

export default function App() {
  const tabs: [string, string][] = [
    ["Вставка", "ml-[16px]"],
    ["Дизайн", "ml-[28px]"],
    ["Переходы", "ml-[29px]"],
    ["Анимация", "ml-[28px]"],
    ["Показ слайдов", "ml-[28px]"],
    ["Рецензирование", "ml-[30px]"],
    ["Вид", "ml-[27px]"],
  ];
  return (
    <div className={`w-[1920px] h-[1080px] overflow-hidden flex flex-col bg-[#c5c8cb] ${UI}`}>
      <div className="h-[31px] shrink-0 bg-white relative flex items-start">
        <div className="h-[27px] flex items-center">
          <div className="ml-px w-[19px] h-[19px] border border-[#e07a3c] bg-[#f9d9b8] text-[#c8431a] text-[14px] font-bold flex items-center justify-center font-['Liberation_Sans',sans-serif]">P</div>
          <span className="ml-[5px] w-px h-[20px] bg-[#9a9a9a]" />
          <Save size={15} className="ml-[9px]" color="#2e3d8f" fill="#b9c4ea" />
          <Undo2 size={14} className="ml-[11px]" color="#9a9a9a" strokeWidth={3} />
          <Caret className="ml-[9px]" />
          <RotateCcw size={12} className="ml-[10px]" color="#9a9a9a" strokeWidth={3} />
          <FolderOpen size={17} className="ml-[10px]" color="#b8862b" fill="#f4d37a" />
          <span className="ml-[9px] w-px h-[20px] bg-[#9a9a9a]" />
          <span className="ml-[6px] flex flex-col items-center gap-[1px]"><span className="w-[7px] h-px bg-black" /><Caret className="border-t-black" /></span>
        </div>
        <div className="absolute left-[678px] top-[6px] text-[14.350px] text-[#2b2b2b] whitespace-nowrap">7-3-2 [Режим совместимости] &nbsp;-&nbsp; Microsoft PowerPoint (Сбой активации продукта)</div>
        <div className="ml-auto flex items-center h-[34px] pr-[26px]">
          <span className="w-[12px] h-px bg-[#222]" />
          <svg className="ml-[46px]" width="12" height="12" viewBox="0 0 12 12" fill="none" stroke="#222"><rect x=".5" y="2.500" width="9" height="9" /><path d="M2.500 2.500v-2h9v9h-2" /></svg>
          <svg className="ml-[47px]" width="12" height="12" viewBox="0 0 12 12" stroke="#222"><path d="M0 0l12 12M12 0L0 12" /></svg>
        </div>
      </div>
      <div className="h-[29px] shrink-0 flex items-end bg-white text-[12px] text-[#444] relative">
        <div className="w-[69px] h-[28px] rounded-t-[2px] bg-gradient-to-b from-[#e8622f] to-[#d8481a] text-white font-semibold flex items-center justify-center">Файл</div>
        <div className="ml-[4px] w-[74px] h-[28px] -mb-px z-10 bg-white rounded-t-[2px] border border-b-0 border-[#b9bcc0] flex items-center justify-center">Главная</div>
        {tabs.map(([t, c]) => (
          <div key={t} className={`h-[28px] flex items-center ${c}`}>{t}</div>
        ))}
        <div className="ml-auto flex items-center pr-[5px] pb-[4px] gap-[17px]">
          <span className="text-[11px] text-[#444]">⌂</span>
          <span className="w-[16px] h-[16px] rounded-full bg-[#3a78c9] text-white text-[11px] font-bold flex items-center justify-center">?</span>
        </div>
      </div>
      <Ribbon />
      <div className="flex-1 min-h-0 flex">
        <SlidePanel />
        <div className="flex-1 min-w-0 flex flex-col">
          <div className="flex-1 min-h-0 flex bg-gradient-to-b from-[#cdd0d5] to-[#b8bbbf]">
            <div className="flex-1 min-w-0 pl-[298px] pt-[20px] overflow-hidden">
              <Slide />
            </div>
            <MainScroll />
          </div>
          <div className="h-[50px] shrink-0 flex flex-col bg-[#dfe2e6] border-t border-[#9a9da1]">
            <div className="h-[3px] shrink-0" />
            <div className="flex-1 flex bg-white border-t border-[#a9acb0]">
              <div className="flex-1 pl-[12px] pt-[6px] text-[19px] leading-[28px] text-[#222]">Заметки к слайду</div>
              <div className="w-[20px] bg-[#dfe2e8] flex flex-col items-center justify-between py-[5px]">
                <span className="w-0 h-0 border-x-[5px] border-x-transparent border-b-[5px] border-b-[#8e9a98]" />
                <Caret className="border-x-[5px] border-t-[5px] border-t-[#8e9a98]" />
              </div>
            </div>
          </div>
        </div>
      </div>
      <StatusBar />
      <Taskbar />
    </div>
  );
}
